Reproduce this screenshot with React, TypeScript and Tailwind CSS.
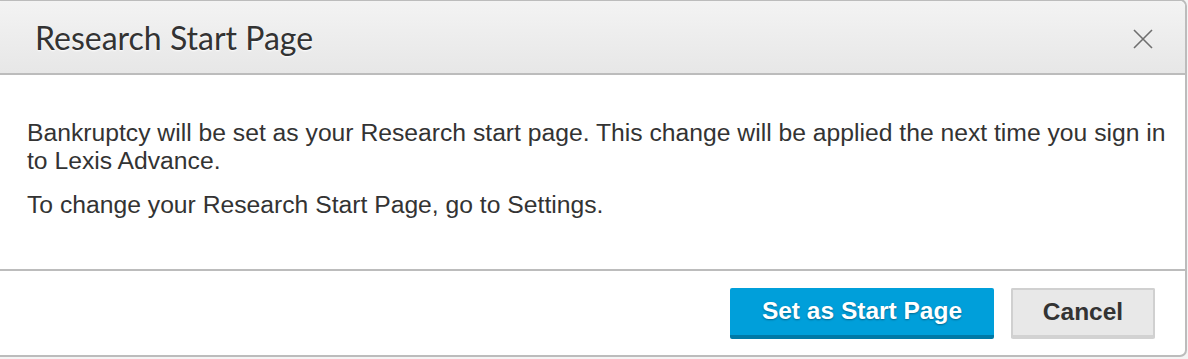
import React from "react";

export default function App() {
  return (
    <div className="w-[1188px] h-[359px] bg-[#f4f4f4] overflow-hidden relative">
      <div className="w-[1193px] -ml-[6px] bg-white border-2 border-[#bcbcbc] rounded-[7px] flex flex-col h-[358px] mt-[-1px]">
        <div
          className="h-[74px] flex items-center justify-between pl-[39px] pr-[32px] border-b-2 border-[#bcbcbc] rounded-t-[6px] bg-gradient-to-b from-[#f3f3f3] to-[#e7e7e7]"
        >
          <h1
            className="text-[32px] text-[#333] leading-none pt-[2px] [text-shadow:0_1px_2px_rgba(255,255,255,1)]"
            style={{ fontFamily: "Lato, 'Open Sans', sans-serif" }}
          >
            Research Start Page
          </h1>
          <svg width="20" height="20" viewBox="0 0 20 20" className="mt-[4px]">
            <path d="M1 1 L19 19 M19 1 L1 19" stroke="#6f6f6f" strokeWidth="1.6" fill="none" />
          </svg>
        </div>
        <div
          className="h-[196px] pl-[31px] pr-[10px] pt-[44px] text-[24.7px] leading-[28px] text-[#333] border-b-2 border-[#bcbcbc]"
          style={{ fontFamily: "'Liberation Sans', Arial, sans-serif" }}
        >
          <p>
            Bankruptcy will be set as your Research start page. This change will be applied the next time you sign in to Lexis Advance.
          </p>
          <p className="mt-[16px]">To change your Research Start Page, go to Settings.</p>
        </div>
        <div
          className="flex-1 flex justify-end items-start pt-[17px] pr-[30px] gap-[17px]"
          style={{ fontFamily: "'Liberation Sans', Arial, sans-serif" }}
        >
          <button className="w-[264px] h-[51px] bg-[#009fda] border-b-[4px] border-[#0079a6] rounded-[2px] text-white font-bold text-[24.5px] [text-shadow:0_1px_2px_rgba(0,0,0,0.35)]">
            Set as Start Page
          </button>
          <button className="w-[144px] h-[51px] bg-[#e8e8e8] border-2 border-[#d0d0d0] border-b-[4px] border-b-[#d2d2d2] rounded-[2px] text-[#333] font-bold text-[24.5px]">
            Cancel
          </button>
        </div>
      </div>
    </div>
  );
}
